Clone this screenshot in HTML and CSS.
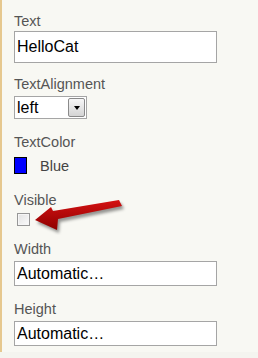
FILE: index.html
```html
<!DOCTYPE html>
<html lang="en">
<head>
    <meta charset="UTF-8">
    <meta name="viewport" content="width=device-width, initial-scale=1.0">
    <title>Properties</title>
    <link rel="stylesheet" href="styles.css">
</head>
<body>
    <div class="panel">
        <!-- Text -->
        <div class="prop prop-text">
            <div class="prop-label">Text</div>
            <div class="text-box tall">HelloCat</div>
        </div>

        <!-- TextAlignment -->
        <div class="prop prop-align">
            <div class="prop-label">TextAlignment</div>
            <div class="choice">
                <span class="choice-value">left</span>
                <span class="choice-btn"><span class="tri"></span></span>
            </div>
        </div>

        <!-- TextColor -->
        <div class="prop prop-color">
            <div class="prop-label">TextColor</div>
            <div class="color-row">
                <span class="swatch"></span>
                <span class="color-name">Blue</span>
            </div>
        </div>

        <!-- Visible -->
        <div class="prop prop-visible">
            <div class="prop-label">Visible</div>
            <span class="check"></span>
        </div>

        <!-- Width -->
        <div class="prop prop-size">
            <div class="prop-label">Width</div>
            <div class="text-box">Automatic…</div>
        </div>

        <!-- Height -->
        <div class="prop prop-size">
            <div class="prop-label">Height</div>
            <div class="text-box">Automatic…</div>
        </div>

        <!-- Callout arrow -->
        <svg class="arrow" width="100" height="40" viewBox="0 0 100 40">
            <defs>
                <linearGradient id="redGrad" x1="0" y1="0" x2="0" y2="1">
                    <stop offset="0" stop-color="#d41212"/>
                    <stop offset="1" stop-color="#8e0000"/>
                </linearGradient>
                <filter id="soft" x="-20%" y="-40%" width="140%" height="180%">
                    <feGaussianBlur stdDeviation="1.6"/>
                </filter>
            </defs>
            <polygon points="4,25 20,12 22,16 88,5 91,11 27,24 26,35" fill="rgba(0,0,0,0.4)" filter="url(#soft)" transform="translate(2,3)"/>
            <polygon points="4,25 20,12 22,16 88,5 91,11 27,24 26,35" fill="url(#redGrad)"/>
        </svg>
    </div>
</body>
</html>
```

FILE: styles.css
```css
/* General Styles */
* {
    box-sizing: border-box;
}

html, body {
    margin: 0;
    font-family: "Liberation Sans", Arial, sans-serif;
    background-color: #f4f4ef;
}

/* Panel */
.panel {
    position: relative;
    height: 352px;
    padding: 13px 0 0 12px;
    border-left: 2px solid #e6c88f;
    background: #f8f8f3;
    display: flex;
    flex-direction: column;
}

.prop-label {
    font-size: 14.5px;
    line-height: 16px;
    color: #555;
    margin-bottom: 4px;
}

.prop-text .prop-label {
    margin-bottom: 2px;
}

.prop-align {
    margin-top: 13px;
}

.prop-color {
    margin-top: 15px;
}

.prop-color .prop-label {
    margin-bottom: 7px;
}

.prop-visible {
    margin-top: 18px;
}

.prop-visible .prop-label {
    margin-bottom: 5px;
}

.prop-size {
    margin-top: 15px;
}

/* Text boxes */
.text-box {
    width: 203px;
    height: 25px;
    padding-left: 2px;
    border: 1px solid #a5a5a5;
    background: #fff;
    font-size: 16px;
    line-height: 23px;
    color: #000;
}

.text-box.tall {
    height: 32px;
    line-height: 30px;
}

/* Dropdown */
.choice {
    width: 73px;
    height: 23px;
    display: flex;
    align-items: stretch;
    border: 1px solid #a5a5a5;
    background: #fff;
}

.choice-value {
    flex: 1;
    padding-left: 2px;
    font-size: 16px;
    line-height: 21px;
    color: #000;
}

.choice-btn {
    width: 17px;
    margin: 1px;
    display: flex;
    align-items: center;
    justify-content: center;
    border: 1px solid #8a8a8a;
    border-radius: 2px;
    background: linear-gradient(#f7f7f7, #d4d4d4);
}

.tri {
    width: 0;
    height: 0;
    border-left: 3px solid transparent;
    border-right: 3px solid transparent;
    border-top: 4px solid #000;
}

/* Color row */
.color-row {
    display: flex;
    align-items: center;
    gap: 13px;
    height: 17px;
}

.swatch {
    width: 13px;
    height: 17px;
    background: #0000ff;
    border: 1px solid #000;
}

.color-name {
    font-size: 14.5px;
    color: #444;
}

/* Checkbox */
.check {
    display: block;
    width: 13px;
    height: 13px;
    margin-left: 3px;
    border: 1px solid #979797;
    background: linear-gradient(135deg, #e2e2e2, #fbfbfb);
    box-shadow: inset 0 0 0 1px #f6f6f6;
}

/* Callout arrow */
.arrow {
    position: absolute;
    left: 29px;
    top: 195px;
}
```
